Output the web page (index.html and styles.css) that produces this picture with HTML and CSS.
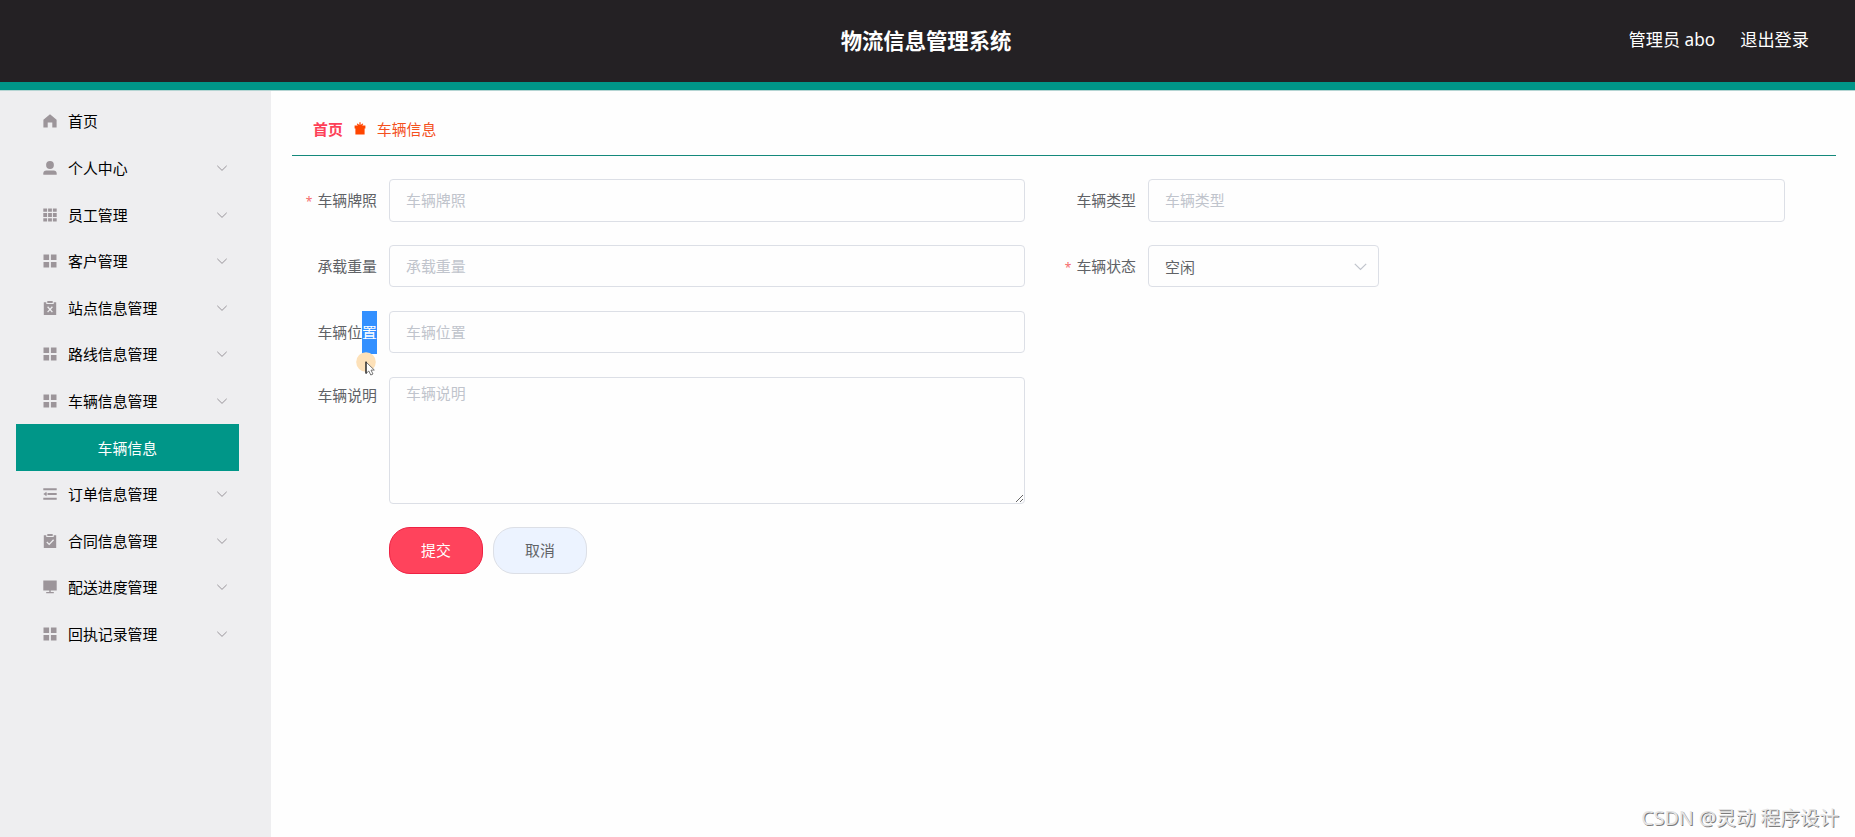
FILE: index.html
```html
<!DOCTYPE html>
<html lang="zh-CN">
<head>
<meta charset="utf-8">
<title>物流信息管理系统</title>
<link rel="stylesheet" href="styles.css">
</head>
<body>
<svg class="defs" aria-hidden="true">
  <symbol id="i-grid" viewBox="0 0 14 14"><path d="M.5.5h5.6v5.6H.5zM7.9.5h5.6v5.6H7.9zM.5 7.9h5.6v5.6H.5zM7.9 7.9h5.6v5.6H7.9z"/></symbol>
  <symbol id="i-down" viewBox="0 0 14 14"><path d="M2.3 4.8 7 9.4l4.7-4.6" fill="none" stroke="currentColor" stroke-width="1"/></symbol>
</svg>
<header class="header">
  <span class="header-side"></span>
  <h1 class="title">物流信息管理系统</h1>
  <div class="header-side user"><span>管理员 abo</span><span>退出登录</span></div>
</header>
<div class="body">
  <nav class="menu">
    <a class="item"><svg class="icon" viewBox="0 0 14 14"><path d="M7 .2.4 5.7V13.4h4.3V8.5h4.6v4.9h4.3V5.7z"/></svg><span>首页</span></a>
    <a class="item"><svg class="icon" viewBox="0 0 14 14"><circle cx="7" cy="4" r="3.9"/><path d="M.3 13.8v-1.4c0-2 1.2-3 3-3h7.4c1.8 0 3 1 3 3v1.4z"/></svg><span>个人中心</span><svg class="arrow"><use href="#i-down"/></svg></a>
    <a class="item"><svg class="icon" viewBox="0 0 14 14"><path d="M.3.5h3.8v3.2H.3zM5.1.5h3.8v3.2H5.1zM9.9.5h3.8v3.2H9.9zM.3 5h3.8v4H.3zM5.1 5h3.8v4H5.1zM9.9 5h3.8v4H9.9zM.3 10.2h3.8v3.2H.3zM5.1 10.2h3.8v3.2H5.1zM9.9 10.2h3.8v3.2H9.9z"/></svg><span>员工管理</span><svg class="arrow"><use href="#i-down"/></svg></a>
    <a class="item"><svg class="icon"><use href="#i-grid"/></svg><span>客户管理</span><svg class="arrow"><use href="#i-down"/></svg></a>
    <a class="item"><svg class="icon" viewBox="0 0 14 14"><path d="M.8 1.3h2.5v1.6h7.4V1.3h2.5V14H.8z"/><path d="M4.3 0h5.4v2H4.3z"/><path class="cut" d="m4.6 5.7 4.8 5.4m0-5.4-4.8 5.4"/></svg><span>站点信息管理</span><svg class="arrow"><use href="#i-down"/></svg></a>
    <a class="item"><svg class="icon"><use href="#i-grid"/></svg><span>路线信息管理</span><svg class="arrow"><use href="#i-down"/></svg></a>
    <a class="item"><svg class="icon"><use href="#i-grid"/></svg><span>车辆信息管理</span><svg class="arrow"><use href="#i-down"/></svg></a>
    <a class="item active"><span>车辆信息</span></a>
    <a class="item"><svg class="icon" viewBox="0 0 14 14"><path d="M.3 1.3h13.4v2H.3zM5 6h8.7v2H5zM.3 10.7h13.4v2H.3zM.3 7l3.2-2.2v4.4zM3 6.5h2v1H3z"/></svg><span>订单信息管理</span><svg class="arrow"><use href="#i-down"/></svg></a>
    <a class="item"><svg class="icon" viewBox="0 0 14 14"><path d="M.8 1.3h2.5v1.6h7.4V1.3h2.5V14H.8z"/><path d="M4.3 0h5.4v2H4.3z"/><path class="cut" d="m3.8 8 2.4 2.4 4.4-4.6"/></svg><span>合同信息管理</span><svg class="arrow"><use href="#i-down"/></svg></a>
    <a class="item"><svg class="icon" viewBox="0 0 14 14"><path d="M.3.5h13.4v10H.3zM6.3 10.5h1.4V12h3.1v1.3H3.2V12h3.1z"/></svg><span>配送进度管理</span><svg class="arrow"><use href="#i-down"/></svg></a>
    <a class="item"><svg class="icon"><use href="#i-grid"/></svg><span>回执记录管理</span><svg class="arrow"><use href="#i-down"/></svg></a>
  </nav>
  <main class="main">
    <div class="crumbs">
      <b>首页</b>
      <svg class="crumb-icon" viewBox="0 0 12 13"><path d="M.6 3.4h3.2L2.7 2l.8-.6 1.9 1.5V.2h1.2v2.7l1.9-1.5.8.6-1.1 1.4h3.2v3h-.8v6H1.4v-6H.6z"/></svg>
      <span>车辆信息</span>
    </div>
    <form class="form">
      <label class="label"><i class="req">*</i>车辆牌照</label><input class="field" placeholder="车辆牌照">
      <label class="label">车辆类型</label><input class="field" placeholder="车辆类型">
      <label class="label">承载重量</label><input class="field short" placeholder="承载重量">
      <label class="label"><i class="req">*</i>车辆状态</label>
      <div class="field short select"><span>空闲</span><svg class="select-arrow"><use href="#i-down"/></svg></div>
      <div class="label">车辆位<span class="selected">置</span>
        <svg class="pointer" viewBox="0 0 22 25"><circle cx="10" cy="10" r="9.8" fill="#fde1b9"/><path d="M10 10v11.5l2.8-2.5 2 4 2.2-1-2-3.8 3.3-.2z" fill="#fff" stroke="#555" stroke-width=".8"/><path d="M10 9.5v12" stroke="#111" stroke-width="1.1"/></svg>
      </div><input class="field short" placeholder="车辆位置">
      <label class="label area-label">车辆说明</label><textarea class="field area" placeholder="车辆说明"></textarea>
      <div class="actions"><button type="button" class="btn primary">提交</button><button type="button" class="btn">取消</button></div>
    </form>
  </main>
</div>
<div class="watermark">CSDN @灵动 程序设计</div>
</body>
</html>
```
FILE: styles.css
```css
* { box-sizing: border-box; }
body {
  margin: 0;
  height: 837px;
  overflow: hidden;
  display: flex;
  flex-direction: column;
  background: #fefefe;
  font-family: "Noto Sans", "Noto Sans CJK SC", sans-serif;
  font-size: 14.9px;
  line-height: 20px;
}
.defs { position: absolute; width: 0; height: 0; }
.header {
  flex: none;
  display: flex;
  align-items: center;
  height: 91px;
  padding: 0 46px 9px 43px;
  background: #242124;
  border-bottom: 1px solid #b5d5d3;
  box-shadow: inset 0 -8px #009688;
  color: #fff;
}
.header-side { flex: 1; }
.title { margin: 0; font-size: 21.35px; line-height: 30px; font-weight: 700; }
.user { display: flex; justify-content: flex-end; gap: 25px; padding-bottom: 1px; font-size: 17.2px; }
.body { flex: 1; display: flex; min-height: 0; }
.menu { width: 271px; flex: none; padding: 7.2px 32px 0 16px; background: #eeeef0; }
.item {
  display: flex;
  align-items: center;
  height: 46.6px;
  padding: 0 10px 0 27px;
  color: #000;
}
.item span { flex: 1; }
.icon { width: 14px; height: 14px; margin: 0 10.7px 0 .3px; fill: #9c959a; }
.cut { fill: none; stroke: #eeeef0; stroke-width: 1.3; }
.arrow { width: 14px; height: 14px; color: #98949a; }
.active { padding-left: 81.5px; background: #009688; color: #fff; }
.main { flex: 1; padding: 0 19px 0 21px; }
.crumbs {
  display: flex;
  align-items: center;
  height: 65px;
  padding: 11px 0 0 21px;
  border-bottom: 1px solid #14897b;
  color: #f4511e;
}
.crumbs b { color: #fd4158; }
.crumb-icon { width: 12px; height: 13px; margin: 0 11px; fill: #ff4500; }
.form {
  display: grid;
  grid-template-columns: 97px 636px 123px 637px;
  grid-template-rows: 43px 43px 43px 127px 47px;
  row-gap: 23px;
  padding-top: 23px;
}
.label {
  position: relative;
  padding-right: 12px;
  text-align: right;
  line-height: 43px;
  color: #606266;
}
.req { margin-right: 5px; font-size: 12px; font-style: normal; color: #f56c6c; }
.selected { display: inline-block; height: 43px; background: #3390ff; color: #fff; }
.pointer { position: absolute; right: 11px; top: 41px; width: 22px; height: 25px; }
.field {
  width: 100%;
  height: 43px;
  padding: 0 16px 2px;
  border: 1px solid #dcdfe6;
  border-radius: 4px;
  background: #fefefe;
  color: #606266;
  font: inherit;
  outline: 0;
}
.short { height: 42px; padding-bottom: 0; }
.field::placeholder { color: #c0c4cc; opacity: 1; }
.select { width: 231px; display: flex; align-items: center; justify-content: space-between; padding: 1px 9px 0 16px; }
.select-arrow { width: 17px; height: 17px; color: #c0c4cc; }
.area-label { grid-row: 4; line-height: 37px; }
.area { grid-row: 4; height: 127px; padding: 4px 16px; line-height: 22px; resize: vertical; }
.actions { grid-area: 5 / 2; display: flex; gap: 10px; }
.btn {
  width: 94px;
  height: 47px;
  padding: 0 0 1px;
  border: 1px solid #dcdfe6;
  border-radius: 21px;
  background: #ecf3ff;
  color: #606266;
  font: inherit;
}
.primary { border-color: #ee2143; background: #ff435c; color: #fff; }
.watermark {
  position: absolute;
  right: 16px;
  bottom: 5px;
  font-size: 19.6px;
  line-height: 28px;
  color: #e4e4e4;
  text-shadow: 1px 1px 0 #7c7c7c;
}
```
